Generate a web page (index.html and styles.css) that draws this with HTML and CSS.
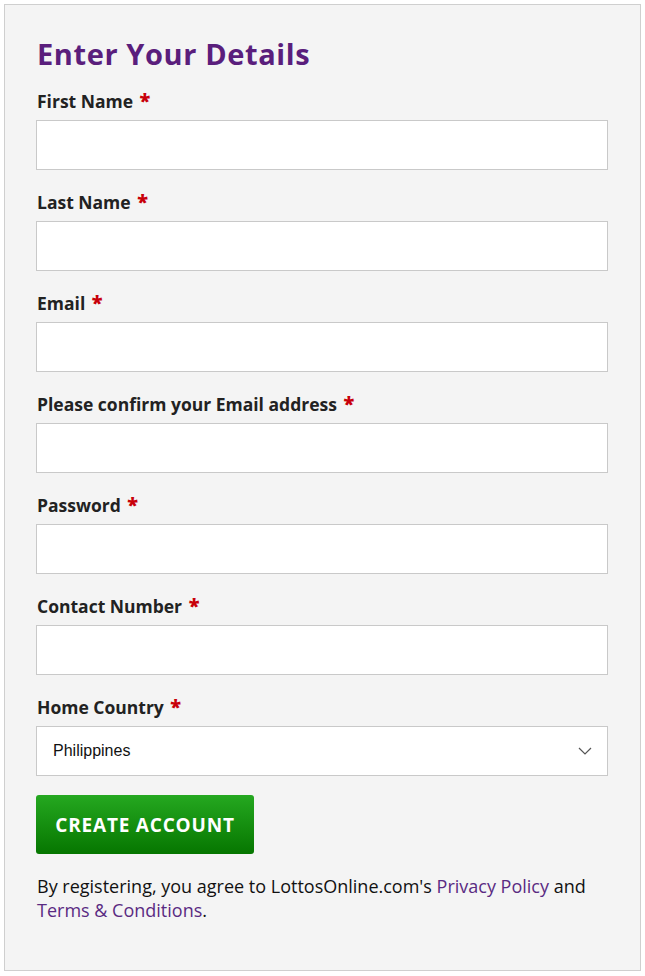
FILE: index.html
```html
<!DOCTYPE html>
<html lang="en">

<head>
    <meta charset="UTF-8">
    <meta name="viewport" content="width=device-width, initial-scale=1.0">
    <title>Enter Your Details</title>
    <link rel="stylesheet" href="styles.css">
</head>

<body>
    <div class="panel">
        <h2 class="title">Enter Your Details</h2>
        <form class="details">
            <div class="field">
                <label>First Name <b>*</b></label>
                <input type="text">
            </div>
            <div class="field">
                <label>Last Name <b>*</b></label>
                <input type="text">
            </div>
            <div class="field">
                <label>Email <b>*</b></label>
                <input type="text">
            </div>
            <div class="field">
                <label>Please confirm your Email address <b>*</b></label>
                <input type="text">
            </div>
            <div class="field">
                <label>Password <b>*</b></label>
                <input type="password">
            </div>
            <div class="field">
                <label>Contact Number <b>*</b></label>
                <input type="text">
            </div>
            <div class="field">
                <label>Home Country <b>*</b></label>
                <div class="select">
                    <span>Philippines</span>
                    <svg width="14" height="8" viewBox="0 0 14 8"><path d="M1 1l6 6 6-6" fill="none" stroke="#555" stroke-width="1.2"/></svg>
                </div>
            </div>
            <button type="button" class="create">CREATE ACCOUNT</button>
            <p class="note">By registering, you agree to LottosOnline.com's <a href="#">Privacy Policy</a> and <a href="#">Terms &amp; Conditions</a>.</p>
        </form>
    </div>
</body>

</html>
```

FILE: styles.css
```css
body {
    margin: 0;
    padding: 4px;
    font-family: "Open Sans", "Liberation Sans", sans-serif;
}

.panel {
    box-sizing: border-box;
    border: 1px solid #cfcfcf;
    background-color: #f4f4f4;
    padding: 27px 32px 0 31px;
    height: 967px;
}

.title {
    margin: 0 0 13px 1px;
    font-size: 29px;
    font-weight: 700;
    letter-spacing: 0.6px;
    color: #5a1e7c;
    line-height: 44px;
}

.field {
    margin-bottom: 20px;
}

.field label {
    display: block;
    font-size: 17.5px;
    font-weight: 700;
    color: #222;
    line-height: 24px;
    margin-bottom: 7px;
    padding-left: 1px;
}

.field label b {
    color: #c8000a;
    font-size: 20px;
    margin-left: 2px;
}

.field input,
.select {
    display: block;
    box-sizing: border-box;
    width: 100%;
    height: 50px;
    border: 1px solid #c9c9c9;
    background: #fff;
    margin: 0;
}

.select {
    display: flex;
    align-items: center;
    justify-content: space-between;
    padding: 0 15px 0 16px;
    font-family: "Liberation Sans", Arial, sans-serif;
    font-size: 16px;
    color: #111;
}

.create {
    display: block;
    margin-top: -1px;
    width: 218px;
    height: 59px;
    border: none;
    border-radius: 3px;
    background: linear-gradient(#25a820, #067600);
    color: #fff;
    font-family: "Open Sans", sans-serif;
    font-size: 19px;
    font-weight: 700;
    letter-spacing: 0.8px;
}

.note {
    margin: 20px 0 0;
    padding-left: 1px;
    font-size: 18px;
    line-height: 24px;
    color: #111;
}

.note a {
    color: #5a2a82;
    text-decoration: none;
}
```
